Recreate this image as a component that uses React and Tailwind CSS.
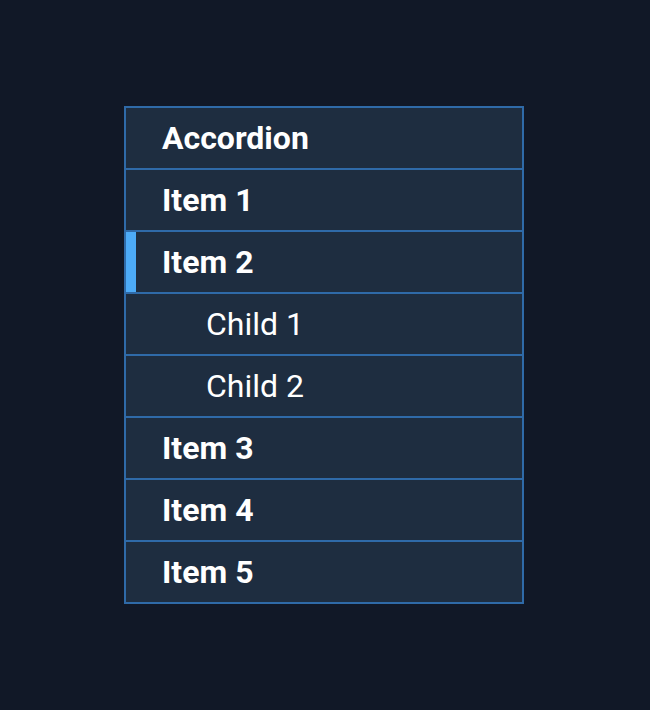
import React from "react";

const rows = [
  { label: "Accordion", kind: "head" },
  { label: "Item 1", kind: "item" },
  { label: "Item 2", kind: "item", active: true },
  { label: "Child 1", kind: "child" },
  { label: "Child 2", kind: "child" },
  { label: "Item 3", kind: "item" },
  { label: "Item 4", kind: "item" },
  { label: "Item 5", kind: "item" },
];

export default function App() {
  return (
    <div
      className="w-[650px] h-[710px] bg-[#111827] pt-[106px] pl-[124px]"
      style={{ fontFamily: "Roboto, 'Noto Sans', sans-serif" }}
    >
      <div className="w-[400px] border border-[#2f6aa8] flex flex-col">
        {rows.map((r) => (
          <div
            key={r.label}
            className="relative h-[62px] border border-[#2f6aa8] bg-[#1e2d40] flex items-center text-white text-[32px] leading-none"
          >
            {r.active && (
              <div className="absolute left-0 top-0 bottom-0 w-[10px] bg-[#4dabf7]" />
            )}
            <span
              className={
                r.kind === "child"
                  ? "pl-[80px] font-normal"
                  : "pl-[36px] font-bold"
              }
            >
              {r.label}
            </span>
          </div>
        ))}
      </div>
    </div>
  );
}
